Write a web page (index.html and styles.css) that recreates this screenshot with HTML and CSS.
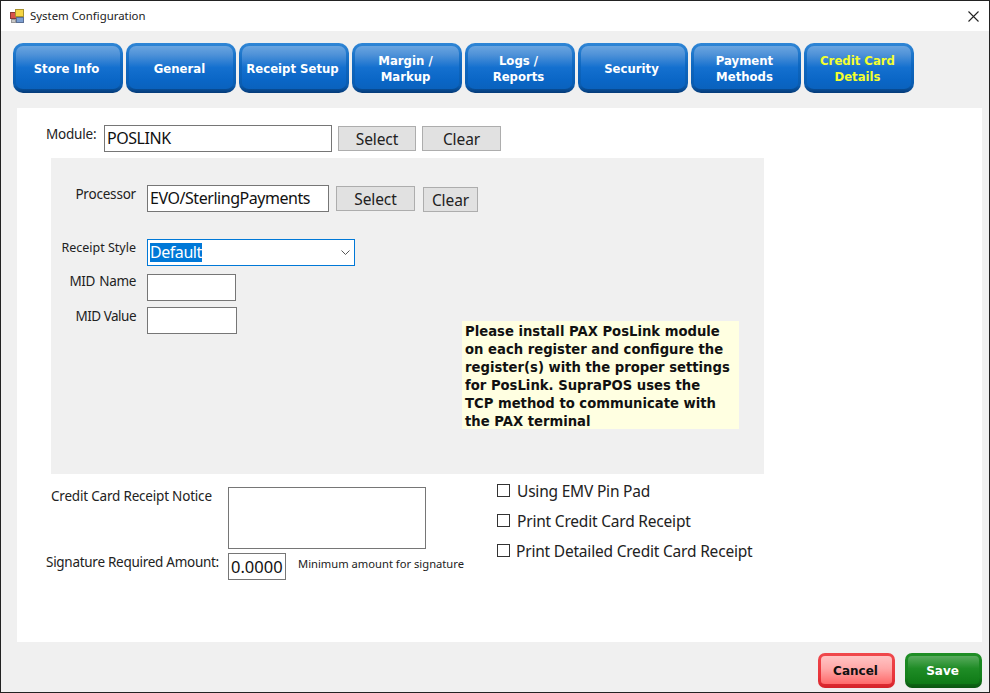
FILE: index.html
```html
<!DOCTYPE html>
<html lang="en">
<head>
<meta charset="utf-8">
<title>System Configuration</title>
<link rel="stylesheet" href="styles.css">
</head>
<body>
<div class="window">
  <header class="titlebar">
    <svg class="app-icon" width="14" height="14" viewBox="0 0 14 14">
      <rect x="0.5" y="3.5" width="6" height="6" fill="#d9534a" stroke="#8a3a36"/>
      <rect x="5.5" y="0.5" width="8" height="7" fill="#f5d545" stroke="#a8922e"/>
      <rect x="6.5" y="8.5" width="7" height="5" fill="#7d9fd0" stroke="#5a6f94"/>
      <rect x="1.5" y="10.5" width="4" height="3" fill="#c8c8c8" stroke="#9a9a9a"/>
    </svg>
    <span class="title">System Configuration</span>
    <svg class="close" width="11" height="11" viewBox="0 0 11 11"><path d="M0.5 0.5 L10.5 10.5 M10.5 0.5 L0.5 10.5" stroke="#222" stroke-width="1.1" fill="none"/></svg>
  </header>
  <nav class="tabs">
    <div class="tab">Store Info</div>
    <div class="tab">General</div>
    <div class="tab">Receipt Setup</div>
    <div class="tab">Margin /<br>Markup</div>
    <div class="tab">Logs /<br>Reports</div>
    <div class="tab">Security</div>
    <div class="tab">Payment<br>Methods</div>
    <div class="tab tab-active">Credit Card<br>Details</div>
  </nav>
  <main class="panel">
    <div class="module-row">
      <span class="label module-label">Module:</span>
      <div class="field module-field">POSLINK</div>
      <div class="btn btn-select-a">Select</div>
      <div class="btn btn-clear-a">Clear</div>
    </div>
    <section class="gray">
      <div class="row proc-row">
        <span class="label side">Processor</span>
        <div class="field proc-field">EVO/SterlingPayments</div>
        <div class="btn btn-select-b">Select</div>
        <div class="btn btn-clear-b">Clear</div>
      </div>
      <div class="row style-row">
        <span class="label side style-label">Receipt Style</span>
        <div class="combo">
          <span class="selected">Default</span>
          <svg class="chev" width="9" height="5" viewBox="0 0 9 5"><path d="M0.5 0.5 L4.5 4.5 L8.5 0.5" stroke="#555" fill="none"/></svg>
        </div>
      </div>
      <div class="mid-block">
        <div class="mid-col">
          <div class="row mid-name-row">
            <span class="label side">MID&nbsp; Name</span>
            <div class="field mid-name"></div>
          </div>
          <div class="row mid-value-row">
            <span class="label side">MID Value</span>
            <div class="field mid-value"></div>
          </div>
        </div>
        <p class="note">Please install PAX PosLink module<br>on each register and configure the<br>register(s) with the proper settings<br>for PosLink. SupraPOS uses the<br>TCP method to communicate with<br>the PAX terminal</p>
      </div>
    </section>
    <section class="lower">
      <div class="lower-left">
        <div class="notice-row">
          <span class="label notice-label">Credit Card Receipt Notice</span>
          <div class="field notice-field"></div>
        </div>
        <div class="sig-row">
          <span class="label sig-label">Signature Required Amount:</span>
          <div class="field sig-field">0.0000</div>
          <span class="hint">Minimum amount for signature</span>
        </div>
      </div>
      <div class="lower-right">
        <div class="check"><span class="box"></span><span class="check-text">Using EMV Pin Pad</span></div>
        <div class="check"><span class="box"></span><span class="check-text">Print Credit Card Receipt</span></div>
        <div class="check check-tight"><span class="box"></span><span class="check-text">Print Detailed Credit Card Receipt</span></div>
      </div>
    </section>
  </main>
  <footer class="footer">
    <div class="action cancel">Cancel</div>
    <div class="action save">Save</div>
  </footer>
</div>
</body>
</html>
```
FILE: styles.css
```css
* { box-sizing: border-box; }
html, body { margin: 0; padding: 0; }
body { width: 990px; height: 693px; overflow: hidden; background: #f0f0f0; font-family: "Noto Sans", "DejaVu Sans", sans-serif; color: #111; }
.window { width: 990px; height: 693px; border: 1px solid #222; background: #f0f0f0; display: flex; flex-direction: column; }

.titlebar { height: 30px; background: #fff; display: flex; align-items: center; padding: 0 10px 1px 9px; flex: none; }
.app-icon { flex: none; }
.title { font-size: 11.4px; margin-left: 6px; color: #222; }
.close { margin-left: auto; margin-top: 1px; }

.tabs { display: flex; gap: 3px; padding: 12px 0 0 12px; height: 77px; flex: none; }
.tab { width: 110px; height: 50px; border-radius: 10px; border: 3px solid transparent; border-bottom-width: 4px; padding: 2px 3px 0 0;
  background: linear-gradient(#6aa5e0 0%, #4f92d8 20%, #1470cf 50%, #0a66c6 80%, #0a62bd 100%) padding-box,
              linear-gradient(#2f86d6 0%, #0e67c0 45%, #0a5cb0 85%, #053b78 100%) border-box;
  color: #fff; font-family: "DejaVu Sans", sans-serif; font-weight: 700; font-size: 11.7px; line-height: 16px;
  display: flex; align-items: center; justify-content: center; text-align: center; }
.tab-active { color: #f4ff2e; }

.panel { width: 965px; height: 534px; margin-left: 16px; background: #fff; flex: none; padding-top: 17px; }

.label { font-size: 13.5px; letter-spacing: -0.2px; color: #222; white-space: nowrap; line-height: 18px; }
.field { border: 1px solid #767676; background: #fff; font-size: 16px; letter-spacing: -0.45px; line-height: 24px; padding-left: 2px; height: 27px; flex: none; white-space: nowrap; }
.btn { background: #e1e1e1; border: 1px solid #adadad; font-size: 15.5px; letter-spacing: -0.1px; height: 25px; line-height: 24px; text-align: center; flex: none; color: #222; }

.module-row { display: flex; padding-left: 29px; height: 27px; }
.module-label { width: 58px; }
.module-field { width: 228px; }
.btn-select-a { width: 78px; margin: 1px 0 0 6px; }
.btn-clear-a { width: 79px; margin: 1px 0 0 6px; }

.gray { width: 713px; height: 316px; margin: 6px 0 0 34px; background: #f0f0f0; padding-top: 27px; }
.row { display: flex; }
.side { width: 85px; text-align: right; margin-right: 11px; }
.proc-row { height: 27px; }
.proc-field { width: 182px; }
.btn-select-b { width: 79px; margin: 1px 0 0 7px; }
.btn-clear-b { width: 55px; margin: 2px 0 0 8px; }

.style-row { margin-top: 27px; height: 27px; }
.style-label { font-size: 12.5px; letter-spacing: 0; margin-top: 0; }
.combo { width: 208px; height: 27px; border: 1px solid #0078d7; background: #fff; display: flex; align-items: center; padding: 0 4px 1px 2px; }
.selected { background: #0078d7; color: #fff; font-size: 16px; letter-spacing: -0.45px; line-height: 19px; }
.chev { margin: 1px 0 0 auto; }

.mid-block { display: flex; margin-top: 8px; }
.mid-name-row { height: 27px; }
.mid-value-row { height: 27px; margin-top: 6px; }
.mid-name-row .side { margin-top: -2px; letter-spacing: -0.35px; word-spacing: -1px; }
.mid-value-row .side { margin-top: 0; letter-spacing: -0.5px; }
.mid-name { width: 89px; }
.mid-value { width: 90px; }
.mid-col { width: 411px; flex: none; }
.note { margin: 47px 0 0 0; width: 277px; height: 108px; background: #ffffe1; color: #111; font-family: "DejaVu Sans", sans-serif; font-weight: 700; font-size: 13.2px; line-height: 18px; padding: 2px 0 0 3px; white-space: nowrap; }

.lower { display: flex; }
.lower-left { width: 480px; flex: none; padding-top: 13px; }
.notice-row { display: flex; height: 62px; padding-left: 34px; }
.notice-label { width: 177px; }
.notice-field { width: 198px; height: 62px; }
.sig-row { display: flex; margin-top: 4px; padding-left: 29px; height: 27px; }
.sig-label { width: 182px; letter-spacing: -0.28px; }
.sig-field { width: 58px; font-size: 16.5px; letter-spacing: 0; line-height: 25px; }
.hint { font-size: 11.2px; margin: 3px 0 0 12px; color: #222; white-space: nowrap; line-height: 16px; }
.lower-right { padding-top: 4px; }
.check { display: flex; align-items: center; height: 24px; margin-bottom: 6px; font-size: 15.5px; letter-spacing: -0.2px; color: #222; white-space: nowrap; }
.check-text { padding-top: 1px; }
.box { width: 13px; height: 13px; border: 1px solid #333; background: #fff; margin: 0 7px 0 0; flex: none; }
.check-tight .box { margin-right: 6px; }

.footer { display: flex; justify-content: flex-end; gap: 10px; padding: 11px 7px 0 0; }
.action { width: 77px; height: 35px; border-radius: 7px; border: 3px solid transparent; border-bottom-width: 4px; padding: 2px 2px 0 0; font-family: "DejaVu Sans", sans-serif; font-weight: 700; font-size: 12px; display: flex; align-items: center; justify-content: center; }
.cancel { color: #111; background: linear-gradient(#ffc4c4 0%, #ffa8a8 45%, #ff6a6a 100%) padding-box, linear-gradient(#f0484c 0%, #e8343a 70%, #d5232a 100%) border-box; }
.save { color: #fff; background: linear-gradient(#58ab5d 0%, #1f8c26 45%, #0f7a16 100%) padding-box, linear-gradient(#1f8f26 0%, #15801c 70%, #0a5510 100%) border-box; }
```
